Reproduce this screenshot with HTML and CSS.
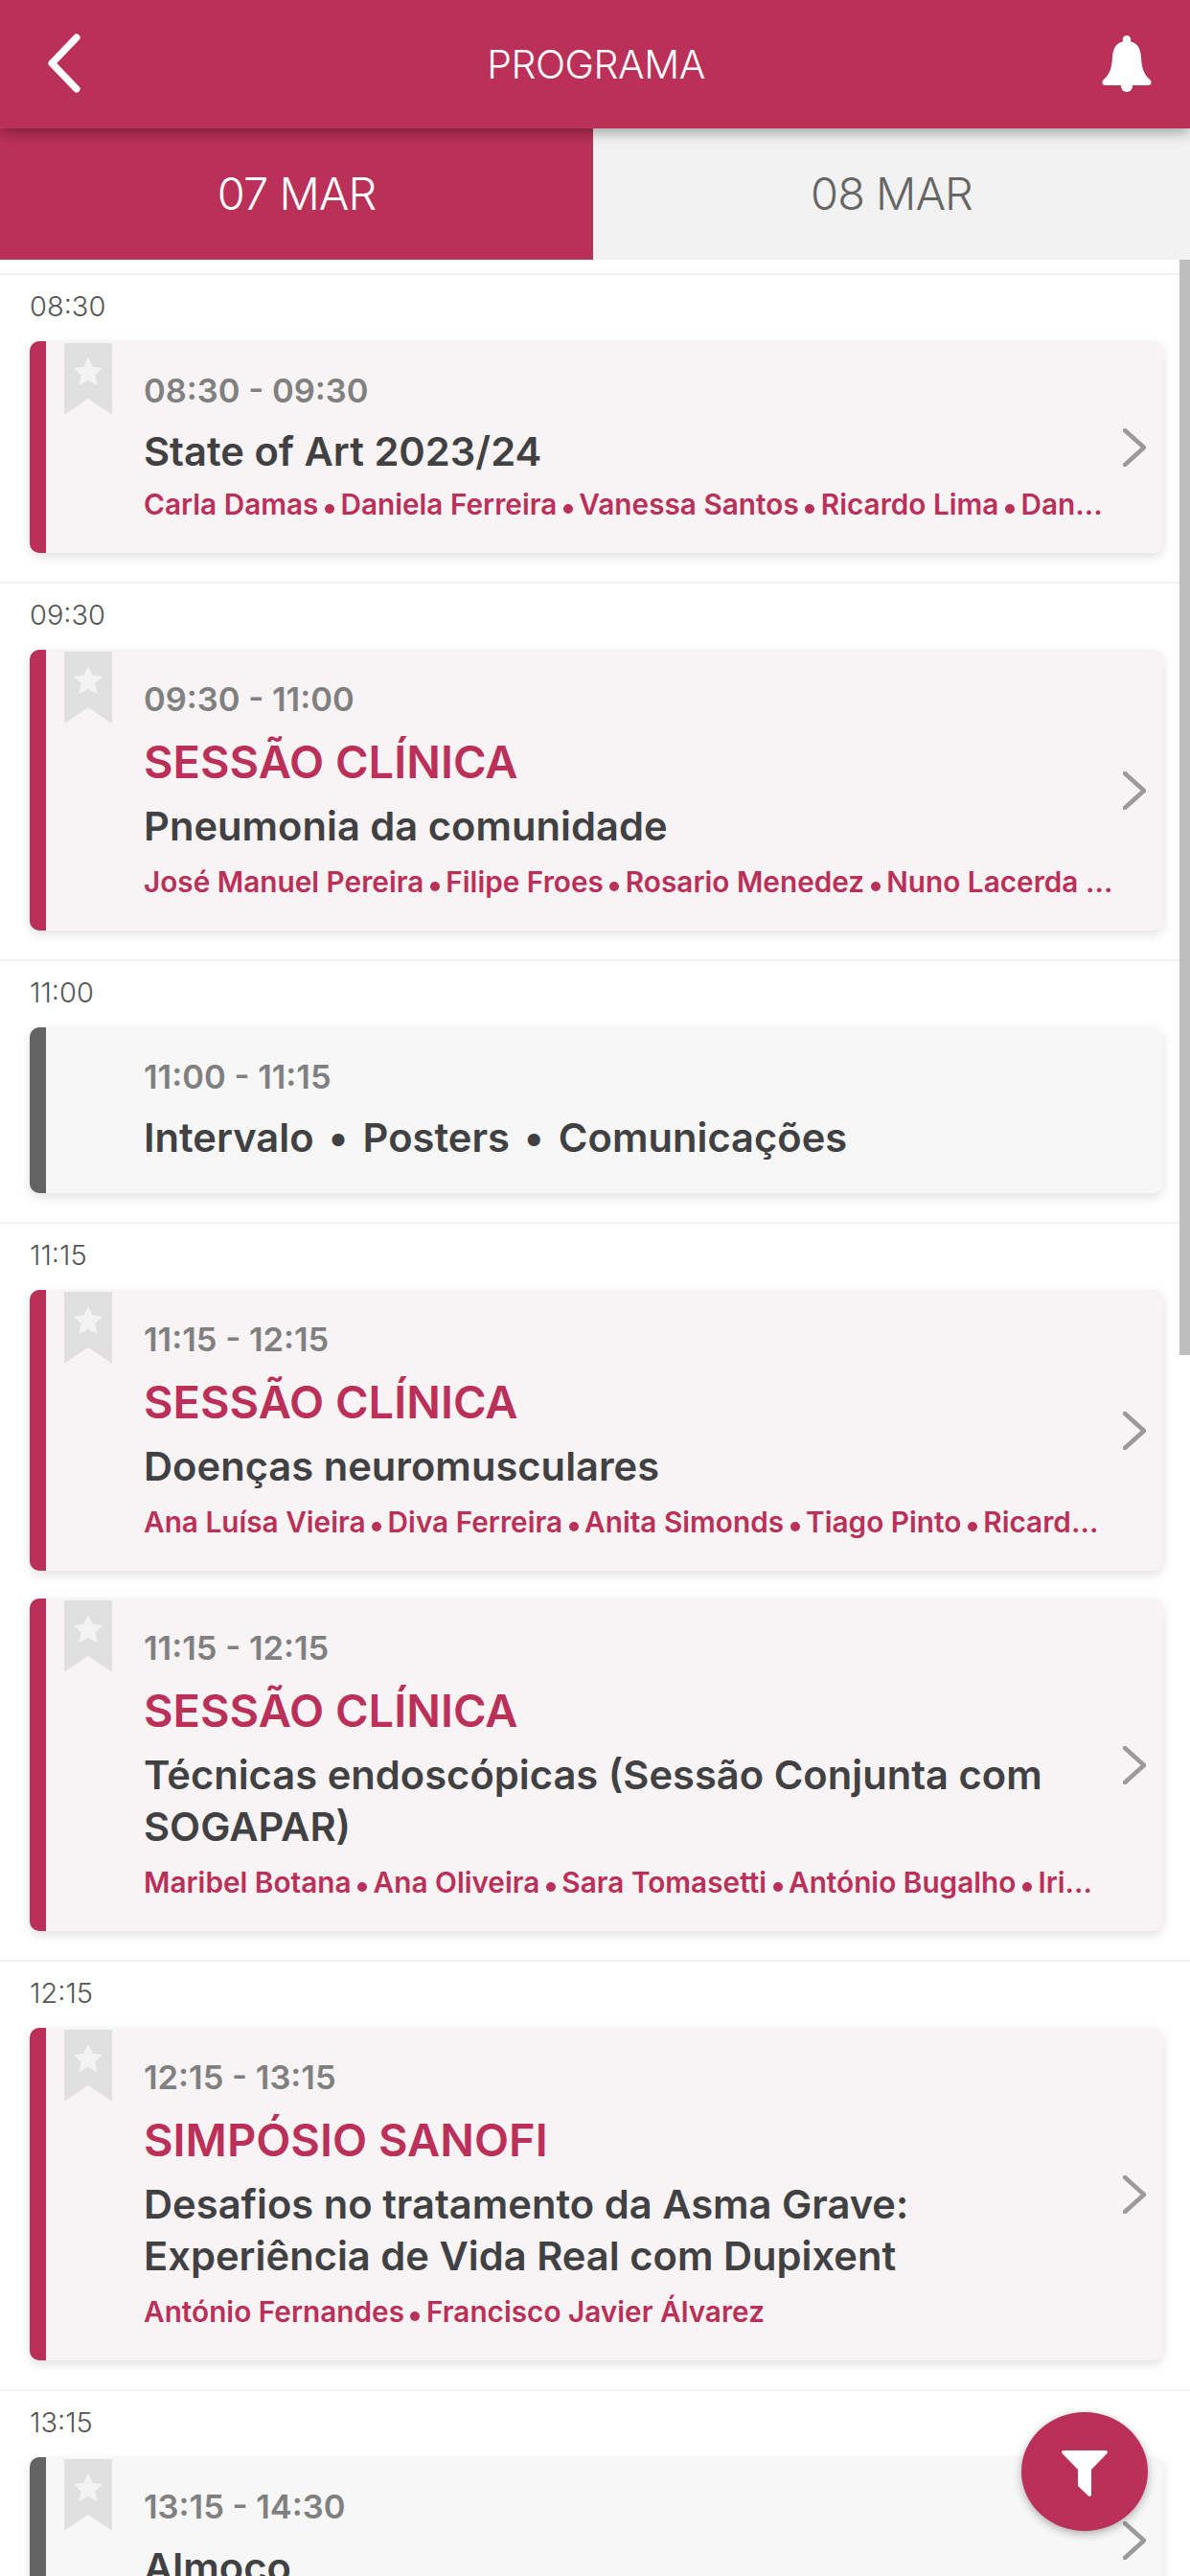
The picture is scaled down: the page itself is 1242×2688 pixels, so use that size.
FILE: index.html
```html
<!DOCTYPE html>
<html lang="pt">
<head>
  <meta charset="UTF-8">
  <meta name="viewport" content="width=device-width, initial-scale=1.0">
  <title>Programa</title>
  <link rel="stylesheet" href="styles.css">
</head>
<body>
  <div class="page">
    <header class="top-bar">
      <svg class="back-icon" viewBox="0 0 32 58"><path d="M28 4 L4 29 L28 54" /></svg>
      <h1>PROGRAMA</h1>
      <svg class="bell-icon" viewBox="0 0 52 59"><path d="M26 0c-2.500 0-4.200 1.800-4.200 4v2.400C14.500 8 11.500 14 11 23 10.500 34 8 41 1.500 46.500-.5 48.500.5 52 3.500 52H20.500a5.600 7 0 0 0 11 0H48.500c3 0 4-3.500 2-5.500C44 41 41.500 34 41 23 40.500 14 37.500 8 30.200 6.400V4C30.200 1.800 28.500 0 26 0z"/><circle cx="26" cy="53" r="6"/></svg>
    </header>

    <nav class="tabs">
      <div class="tab active">07 MAR</div>
      <div class="tab">08 MAR</div>
    </nav>

    <main class="list">
      <section class="slot">
        <div class="slot-time">08:30</div>
        <article class="card">
          <svg class="bookmark" viewBox="0 0 50 75"><path class="bm" d="M0 0H50V75L25 58 0 75z"/><path class="st" d="M25 15l4.700 9.800 10.300 1.300-7.600 7.200 2 10.700-9.400-5.200-9.400 5.200 2-10.700-7.600-7.200 10.300-1.300z"/></svg>
          <div class="card-body">
            <div class="card-time">08:30 - 09:30</div>
            <div class="card-title">State of Art 2023/24</div>
            <div class="speakers">Carla Damas<i class="dot"></i>Daniela Ferreira<i class="dot"></i>Vanessa Santos<i class="dot"></i>Ricardo Lima<i class="dot"></i>Dan...</div>
          </div>
          <svg class="chevron" viewBox="0 0 24 40"><path d="M2 2 L22 20 L2 38"/></svg>
        </article>
      </section>

      <section class="slot">
        <div class="slot-time">09:30</div>
        <article class="card">
          <svg class="bookmark" viewBox="0 0 50 75"><path class="bm" d="M0 0H50V75L25 58 0 75z"/><path class="st" d="M25 15l4.700 9.800 10.300 1.300-7.600 7.200 2 10.700-9.400-5.200-9.400 5.200 2-10.700-7.600-7.200 10.300-1.300z"/></svg>
          <div class="card-body">
            <div class="card-time">09:30 - 11:00</div>
            <div class="card-kind">SESSÃO CLÍNICA</div>
            <div class="card-title">Pneumonia da comunidade</div>
            <div class="speakers">José Manuel Pereira<i class="dot"></i>Filipe Froes<i class="dot"></i>Rosario Menedez<i class="dot"></i>Nuno Lacerda ...</div>
          </div>
          <svg class="chevron" viewBox="0 0 24 40"><path d="M2 2 L22 20 L2 38"/></svg>
        </article>
      </section>

      <section class="slot">
        <div class="slot-time">11:00</div>
        <article class="card grey">
          <div class="card-body">
            <div class="card-time">11:00 - 11:15</div>
            <div class="card-title">Intervalo<span class="sep">•</span>Posters<span class="sep">•</span>Comunicações</div>
          </div>
        </article>
      </section>

      <section class="slot">
        <div class="slot-time">11:15</div>
        <article class="card">
          <svg class="bookmark" viewBox="0 0 50 75"><path class="bm" d="M0 0H50V75L25 58 0 75z"/><path class="st" d="M25 15l4.700 9.800 10.300 1.300-7.600 7.200 2 10.700-9.400-5.200-9.400 5.200 2-10.700-7.600-7.200 10.300-1.300z"/></svg>
          <div class="card-body">
            <div class="card-time">11:15 - 12:15</div>
            <div class="card-kind">SESSÃO CLÍNICA</div>
            <div class="card-title">Doenças neuromusculares</div>
            <div class="speakers">Ana Luísa Vieira<i class="dot"></i>Diva Ferreira<i class="dot"></i>Anita Simonds<i class="dot"></i>Tiago Pinto<i class="dot"></i>Ricard...</div>
          </div>
          <svg class="chevron" viewBox="0 0 24 40"><path d="M2 2 L22 20 L2 38"/></svg>
        </article>
        <article class="card">
          <svg class="bookmark" viewBox="0 0 50 75"><path class="bm" d="M0 0H50V75L25 58 0 75z"/><path class="st" d="M25 15l4.700 9.800 10.300 1.300-7.600 7.200 2 10.700-9.400-5.200-9.400 5.200 2-10.700-7.600-7.200 10.300-1.300z"/></svg>
          <div class="card-body">
            <div class="card-time">11:15 - 12:15</div>
            <div class="card-kind">SESSÃO CLÍNICA</div>
            <div class="card-title">Técnicas endoscópicas (Sessão Conjunta com SOGAPAR)</div>
            <div class="speakers">Maribel Botana<i class="dot"></i>Ana Oliveira<i class="dot"></i>Sara Tomasetti<i class="dot"></i>António Bugalho<i class="dot"></i>Iri...</div>
          </div>
          <svg class="chevron" viewBox="0 0 24 40"><path d="M2 2 L22 20 L2 38"/></svg>
        </article>
      </section>

      <section class="slot">
        <div class="slot-time">12:15</div>
        <article class="card">
          <svg class="bookmark" viewBox="0 0 50 75"><path class="bm" d="M0 0H50V75L25 58 0 75z"/><path class="st" d="M25 15l4.700 9.800 10.300 1.300-7.600 7.200 2 10.700-9.400-5.200-9.400 5.200 2-10.700-7.600-7.200 10.300-1.300z"/></svg>
          <div class="card-body">
            <div class="card-time">12:15 - 13:15</div>
            <div class="card-kind">SIMPÓSIO SANOFI</div>
            <div class="card-title">Desafios no tratamento da Asma Grave: Experiência de Vida Real com Dupixent</div>
            <div class="speakers">António Fernandes<i class="dot"></i>Francisco Javier Álvarez</div>
          </div>
          <svg class="chevron" viewBox="0 0 24 40"><path d="M2 2 L22 20 L2 38"/></svg>
        </article>
      </section>

      <section class="slot">
        <div class="slot-time">13:15</div>
        <article class="card grey">
          <svg class="bookmark" viewBox="0 0 50 75"><path class="bm" d="M0 0H50V75L25 58 0 75z"/><path class="st" d="M25 15l4.700 9.800 10.300 1.300-7.600 7.200 2 10.700-9.400-5.200-9.400 5.200 2-10.700-7.600-7.200 10.300-1.300z"/></svg>
          <div class="card-body">
            <div class="card-time">13:15 - 14:30</div>
            <div class="card-title">Almoço</div>
          </div>
          <svg class="chevron" viewBox="0 0 24 40"><path d="M2 2 L22 20 L2 38"/></svg>
        </article>
      </section>
    </main>

    <div class="scrollbar"></div>

    <button class="filter-btn">
      <svg viewBox="0 0 48 48"><path d="M2 0H46C48 0 48.500 2 47 3.500L31 20V46C31 48 29 48.500 28 47.500L17 37V20L1 3.500C-.5 2 0 0 2 0z"/></svg>
    </button>
  </div>
</body>
</html>
```

FILE: styles.css
```css
html, body {
  margin: 0;
  padding: 0;
}
body {
  font-family: 'Inter', 'Noto Sans', sans-serif;
  background-color: #fff;
}
.page {
  position: relative;
  width: 1242px;
  height: 2688px;
  overflow: hidden;
  background-color: #fff;
}
/* Header */
.top-bar {
  position: relative;
  z-index: 2;
  height: 134px;
  background-color: #ba3058;
  box-shadow: 0 4px 14px rgba(0, 0, 0, 0.35);
  display: flex;
  align-items: center;
  justify-content: space-between;
  padding: 0 40px 0 48px;
}
.top-bar h1 {
  margin: 0 0 0 8px;
  color: #fff;
  font-size: 41px;
  font-weight: 300;
  letter-spacing: -0.5px;
}
.back-icon {
  width: 38px;
  height: 62px;
  margin-top: -2px;
}
.back-icon path {
  fill: none;
  stroke: #fff;
  stroke-width: 7;
  stroke-linecap: round;
  stroke-linejoin: round;
}
.bell-icon {
  width: 52px;
  height: 59px;
  fill: #fff;
  margin-top: -1px;
}
/* Tabs */
.tabs {
  display: flex;
  height: 137px;
}
.tab {
  flex: 1;
  display: flex;
  align-items: center;
  justify-content: center;
  padding-bottom: 2px;
  background-color: #f2f2f2;
  color: #666;
  font-size: 47px;
  font-weight: 300;
  letter-spacing: -1px;
}
.tab.active {
  flex: none;
  width: 619px;
  background-color: #ba3058;
  color: #fff;
}
/* Program list */
.list {
  padding: 14px 28px 0 0;
}
.slot {
  margin-right: -28px;
  padding: 15px 28px 30px 31px;
  border-top: 2px solid #f2f2f2;
  display: flex;
  flex-direction: column;
  gap: 29px;
}
.slot-time {
  height: 36px;
  margin-bottom: -11px;
  line-height: 36px;
  font-size: 29px;
  font-weight: 300;
  color: #555;
}
.card {
  position: relative;
  display: flex;
  align-items: center;
  background-color: #f8f4f6;
  border-left: 17px solid #ba3058;
  border-radius: 10px;
  box-shadow: 0 4px 12px rgba(0, 0, 0, 0.12);
}
.card.grey {
  background-color: #f7f7f7;
  border-left-color: #636363;
}
.bookmark {
  position: absolute;
  left: 19px;
  top: 2px;
  width: 50px;
  height: 75px;
}
.bm {
  fill: #e0e0e0;
}
.st {
  fill: #f3f3f3;
}
.card-body {
  flex: 1;
  min-width: 0;
  padding: 32px 0 31px 102px;
}
.card-time {
  height: 40px;
  line-height: 40px;
  font-size: 34.500px;
  font-weight: 600;
  color: #808080;
}
.card-kind {
  margin-top: 15px;
  line-height: 60px;
  font-size: 47px;
  font-weight: 600;
  color: #ba3058;
}
.card-title {
  margin-top: 16px;
  line-height: 54px;
  font-size: 41.700px;
  font-weight: 600;
  color: #414042;
}
.card-kind + .card-title {
  margin-top: 10px;
}
.sep {
  margin: 0 15px;
}
.speakers {
  margin-top: 8px;
  height: 40px;
  line-height: 40px;
  font-size: 29.750px;
  font-weight: 600;
  color: #ba3058;
  white-space: nowrap;
}
.card-kind + .card-title + .speakers {
  margin-top: 11px;
}
.dot {
  display: inline-block;
  width: 10px;
  height: 10px;
  margin: 0 6.500px 1px;
  border-radius: 50%;
  background-color: #ba3058;
}
.chevron {
  flex: none;
  width: 24px;
  height: 40px;
  margin: 0 18px 0 43px;
}
.chevron path {
  fill: none;
  stroke: #9a9a9a;
  stroke-width: 4.500;
  stroke-linecap: round;
  stroke-linejoin: round;
}
/* Overlays */
.scrollbar {
  position: absolute;
  right: 0;
  top: 271px;
  width: 11px;
  height: 1143px;
  background-color: #bdbdbd;
}
.filter-btn {
  position: absolute;
  left: 1066px;
  top: 2517px;
  width: 132px;
  height: 124px;
  padding: 3px 0 0;
  border: none;
  border-radius: 50%;
  background-color: #ba3058;
  box-shadow: 0 3px 10px rgba(0, 0, 0, 0.3);
  display: flex;
  align-items: center;
  justify-content: center;
}
.filter-btn svg {
  width: 48px;
  height: 48px;
  fill: #fff;
}
```
